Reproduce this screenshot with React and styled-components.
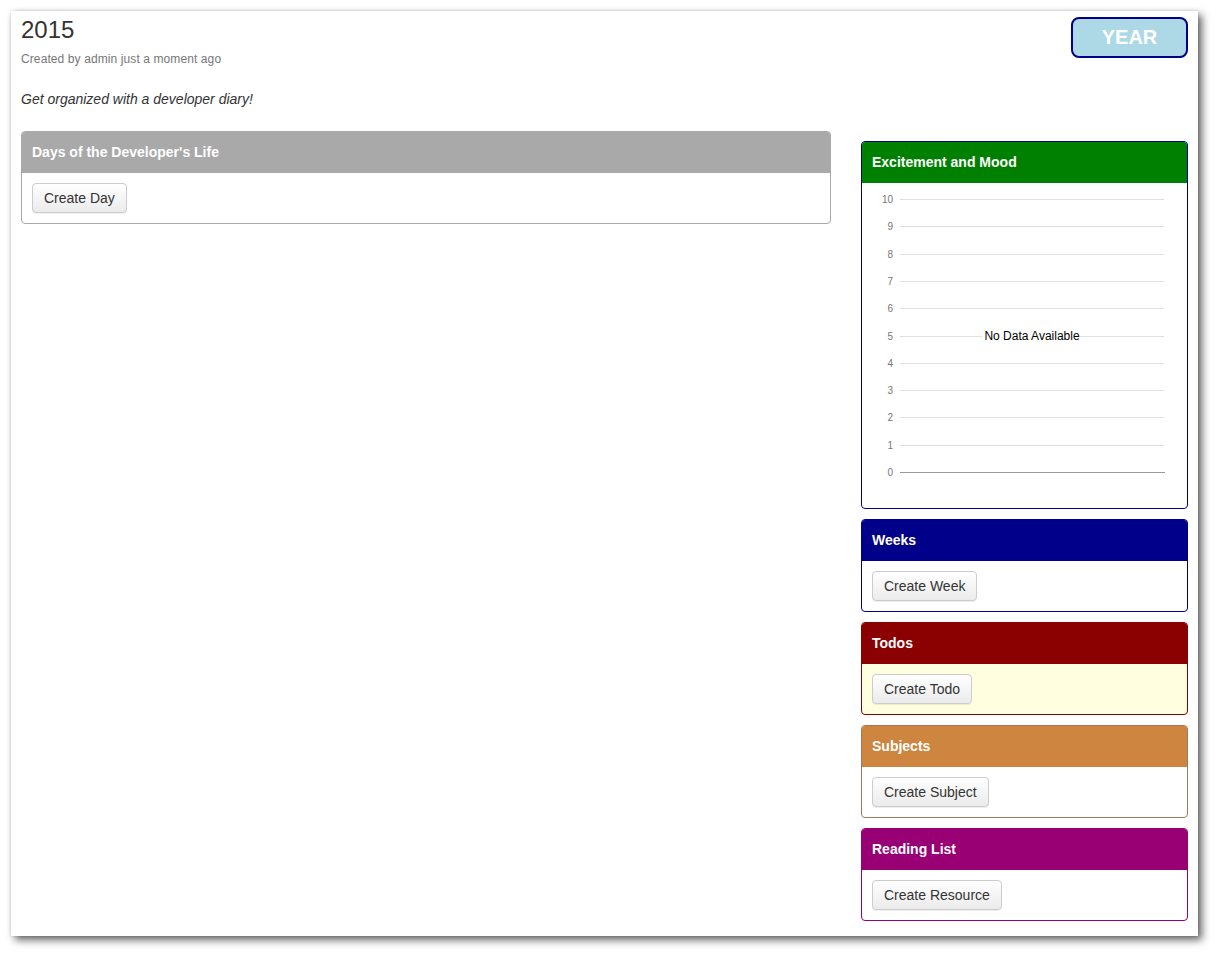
import styled, { createGlobalStyle } from 'styled-components'

const GlobalStyle = createGlobalStyle`
    body {
        margin: 0;
        background: #ffffff;
        font-family: 'Liberation Sans', Arial, sans-serif;
        color: #333333;
    }
`

const Page = styled.div`
    padding: 11px 19px 19px 11px;
`

const Sheet = styled.div`
    background: #ffffff;
    padding: 6px 10px 15px 10px;
    box-shadow: 0 0 3px rgba(0, 0, 0, 0.15), 4px 4px 8px rgba(0, 0, 0, 0.6);
`

const Header = styled.div`
    display: flex;
    justify-content: space-between;
    align-items: flex-start;
`

const Title = styled.h1`
    margin: 0;
    font-size: 24px;
    font-weight: normal;
    line-height: 1.1;
    color: #333;
`

const Meta = styled.div`
    margin-top: 8px;
    font-size: 12px;
    line-height: 17px;
    color: #777;
    letter-spacing: 0.1px;
`

const YearBadge = styled.div`
    width: 113px;
    height: 37px;
    display: flex;
    align-items: center;
    justify-content: center;
    background: #add8e6;
    border: 2px solid #00008b;
    border-radius: 8px;
    color: #ffffff;
    font-weight: bold;
    font-size: 20px;
`

const Description = styled.p`
    margin: 21px 0 22px 0;
    font-size: 14px;
    line-height: 20px;
    font-style: italic;
    color: #333;
`

const Columns = styled.div`
    display: grid;
    grid-template-columns: 810px 1fr;
    column-gap: 30px;
    align-items: start;
`

const Sidebar = styled.div`
    display: flex;
    flex-direction: column;
    gap: 10px;
    margin-top: 10px;
`

const Panel = styled.div`
    border: 1px solid ${({ border }) => border};
    border-radius: 4px;
    background: ${({ bg }) => bg || '#ffffff'};
    overflow: hidden;
`

const PanelHeading = styled.div`
    background: ${({ color }) => color};
    color: #ffffff;
    font-weight: bold;
    font-size: 14px;
    line-height: 16px;
    padding: 12px 10px 13px 10px;
`

const PanelBody = styled.div`
    padding: 10px;
`

const Button = styled.button`
    font-family: 'Liberation Sans', Arial, sans-serif;
    font-size: 14px;
    line-height: 20px;
    padding: 4px 11px;
    color: #333;
    background: linear-gradient(to bottom, #ffffff 0%, #ebebeb 100%);
    border: 1px solid #cccccc;
    border-radius: 4px;
    box-shadow: inset 0 1px 0 rgba(255, 255, 255, 0.15), 0 1px 1px rgba(0, 0, 0, 0.075);
    cursor: pointer;
`

const ChartBody = styled.div`
    height: 325px;
`

const ticks = [10, 9, 8, 7, 6, 5, 4, 3, 2, 1, 0]

function MoodChart() {
    const top = 16
    const step = 27.3
    return (
        <svg width="325" height="325" viewBox="0 0 325 325">
            {ticks.map((t, i) => {
                const y = Math.round(top + i * step) + 0.5
                return (
                    <g key={t}>
                        <line
                            x1="38"
                            x2={t === 0 ? 303 : 302}
                            y1={y}
                            y2={y}
                            stroke={t === 0 ? '#999999' : '#e0e0e0'}
                            strokeWidth="1"
                        />
                        <text
                            x="31"
                            y={y + 3.5}
                            textAnchor="end"
                            fontSize="10"
                            fontFamily="Liberation Sans, Arial, sans-serif"
                            fill="#777"
                        >
                            {t}
                        </text>
                    </g>
                )
            })}
            <rect x="120" y={top + 5 * step - 8} width="98" height="16" fill="#ffffff" />
            <text
                x="170"
                y={top + 5 * step + 4.5}
                textAnchor="middle"
                fontSize="12"
                fontFamily="Liberation Sans, Arial, sans-serif"
                fill="#000"
            >
                No Data Available
            </text>
        </svg>
    )
}

const sidePanels = [
    { title: 'Weeks', color: '#00008b', border: '#00008b', action: 'Create Week' },
    { title: 'Todos', color: '#8b0000', border: '#8b0000', bg: '#ffffe0', action: 'Create Todo' },
    { title: 'Subjects', color: '#cd853f', border: '#a0785a', action: 'Create Subject' },
    { title: 'Reading List', color: '#990073', border: '#990073', action: 'Create Resource' },
]

function App() {
    return (
        <Page>
            <GlobalStyle />
            <Sheet>
                <Header>
                    <div>
                        <Title>2015</Title>
                        <Meta>Created by admin just a moment ago</Meta>
                    </div>
                    <YearBadge>YEAR</YearBadge>
                </Header>
                <Description>Get organized with a developer diary!</Description>
                <Columns>
                    <Panel border="#a9a9a9">
                        <PanelHeading color="#a9a9a9">Days of the Developer's Life</PanelHeading>
                        <PanelBody>
                            <Button>Create Day</Button>
                        </PanelBody>
                    </Panel>
                    <Sidebar>
                        <Panel border="#00008b">
                            <PanelHeading color="#008000">Excitement and Mood</PanelHeading>
                            <ChartBody>
                                <MoodChart />
                            </ChartBody>
                        </Panel>
                        {sidePanels.map((p) => (
                            <Panel key={p.title} border={p.border} bg={p.bg}>
                                <PanelHeading color={p.color}>{p.title}</PanelHeading>
                                <PanelBody>
                                    <Button>{p.action}</Button>
                                </PanelBody>
                            </Panel>
                        ))}
                    </Sidebar>
                </Columns>
            </Sheet>
        </Page>
    )
}

export default App
